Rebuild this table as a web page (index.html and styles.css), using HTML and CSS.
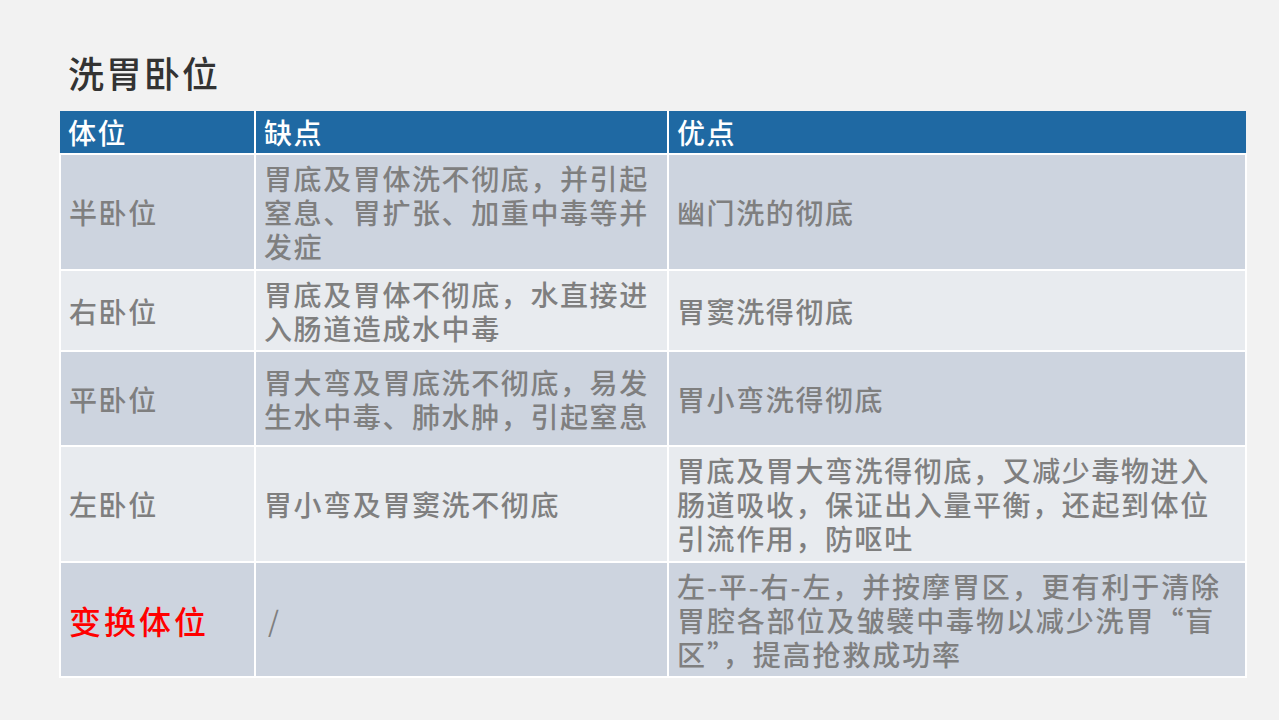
FILE: index.html
```html
<!DOCTYPE html>
<html lang="zh">
<head>
<meta charset="utf-8">
<title>洗胃卧位</title>
<link rel="stylesheet" href="styles.css">
</head>
<body>
<div class="page">
  <h1 class="title">洗胃卧位</h1>
  <table class="grid">
    <colgroup>
      <col class="c1"><col class="c2"><col class="c3">
    </colgroup>
    <thead>
      <tr class="head"><th>体位</th><th>缺点</th><th>优点</th></tr>
    </thead>
    <tbody>
      <tr class="odd r1"><td>半卧位</td><td>胃底及胃体洗不彻底，并引起窒息、胃扩张、加重中毒等并发症</td><td>幽门洗的彻底</td></tr>
      <tr class="even r2"><td>右卧位</td><td>胃底及胃体不彻底，水直接进入肠道造成水中毒</td><td>胃窦洗得彻底</td></tr>
      <tr class="odd r3"><td>平卧位</td><td>胃大弯及胃底洗不彻底，易发生水中毒、肺水肿，引起窒息</td><td>胃小弯洗得彻底</td></tr>
      <tr class="even r4"><td>左卧位</td><td>胃小弯及胃窦洗不彻底</td><td>胃底及胃大弯洗得彻底，又减少毒物进入肠道吸收，保证出入量平衡，还起到体位引流作用，防呕吐</td></tr>
      <tr class="odd r5"><td class="red">变换体位</td><td class="slash">/</td><td class="wide">左-平-右-左，并按摩胃区，更有利于清除胃腔各部位及皱襞中毒物以减少洗胃“盲区”，提高抢救成功率</td></tr>
    </tbody>
  </table>
</div>
</body>
</html>
```

FILE: styles.css
```css
html, body {
  margin: 0;
  padding: 0;
  background: #f2f2f2;
}
body {
  width: 1279px;
  height: 720px;
  overflow: hidden;
  font-family: "Noto Sans CJK SC", "Noto Sans", sans-serif;
}
.page {
  padding: 49px 34px 0 59px;
}
.title {
  margin: 0 0 16px 9px;
  font-size: 36px;
  line-height: 46px;
  font-weight: 500;
  letter-spacing: 2px;
  color: #333333;
}
.grid {
  border-collapse: collapse;
  width: 1186px;
  table-layout: fixed;
}
.c1 { width: 195px; }
.c2 { width: 413px; }
.c3 { width: 578px; }
.grid th, .grid td {
  border: 2px solid #ffffff;
  padding: 0 6px 0 8px;
  text-align: left;
  vertical-align: middle;
  font-size: 28px;
  line-height: 34px;
  letter-spacing: 1.6px;
}
.grid th {
  font-weight: 500;
  color: #ffffff;
  background: #1f69a3;
  height: 42px;
}
.head th { border-top: 0; border-left: 0; border-right-width: 2px; }
.head th:last-child { border-right: 0; }
.grid td {
  color: #7f7f7f;
  font-weight: 500;
}
.odd td { background: #cdd4df; }
.even td { background: #e8ebef; }
.r1 td { height: 114px; }
.r2 td { height: 79px; }
.r3 td { height: 93px; }
.r4 td { height: 114px; }
.r5 td { height: 113px; }
.grid td.red {
  color: #ff0000;
  font-size: 32px;
  letter-spacing: 3px;
}
.grid td.slash {
  font-weight: 400;
  padding-left: 12px;
}
.grid td.wide {
  letter-spacing: 1.9px;
  padding-right: 2px;
}
```
